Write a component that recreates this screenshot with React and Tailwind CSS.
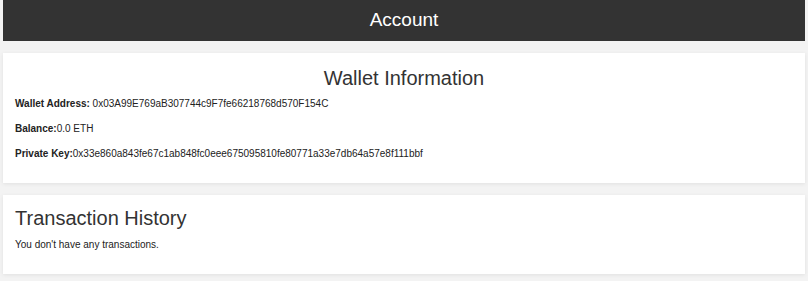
export default function App() {
  return (
    <div className="min-h-screen w-full bg-[#f3f3f3] px-[3px] font-['Liberation_Sans',Arial,sans-serif] text-[#333]">
      {/* Header */}
      <div className="flex h-[41px] items-center justify-center bg-[#333333]">
        <h1 className="m-0 text-[19px] font-normal text-white">Account</h1>
      </div>

      {/* Wallet card */}
      <div className="mt-[12px] bg-white px-[12px] pb-[23px] pt-[12px] shadow-[0_1px_4px_rgba(0,0,0,0.08)]">
        <h2 className="m-0 text-center text-[20px] font-normal leading-[26px] text-[#333]">Wallet Information</h2>
        <div className="mt-[6px] flex flex-col gap-[12px] text-[10px] leading-[13px] text-[#222]">
          <p className="m-0">
            <span className="font-bold">Wallet Address: </span>0x03A99E769aB307744c9F7fe66218768d570F154C
          </p>
          <p className="m-0">
            <span className="font-bold">Balance:</span>0.0 ETH
          </p>
          <p className="m-0">
            <span className="font-bold">Private Key:</span>0x33e860a843fe67c1ab848fc0eee675095810fe80771a33e7db64a57e8f111bbf
          </p>
        </div>
      </div>

      {/* Transactions card */}
      <div className="mt-[12px] bg-white px-[12px] pb-[23px] pt-[10px] shadow-[0_1px_4px_rgba(0,0,0,0.08)]">
        <h2 className="m-0 text-[20px] font-normal leading-[26px] text-[#333]">Transaction History</h2>
        <p className="m-0 mt-[7px] text-[10px] leading-[13px] text-[#222]">You don't have any transactions.</p>
      </div>
    </div>
  );
}
